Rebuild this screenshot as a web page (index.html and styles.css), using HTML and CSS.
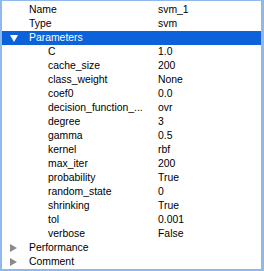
FILE: index.html
```html
<!DOCTYPE html>
<html lang="en">
<head>
    <meta charset="UTF-8">
    <title>Properties</title>
    <link rel="stylesheet" href="styles.css">
</head>
<body>
    <div class="frame">
        <div class="outline">
            <div class="row"><span class="name">Name</span><span class="value">svm_1</span></div>
            <div class="row"><span class="name">Type</span><span class="value">svm</span></div>
            <div class="row group selected"><span class="name"><i class="arrow down"></i>Parameters</span><span class="value"></span></div>
            <div class="row child"><span class="name">C</span><span class="value">1.0</span></div>
            <div class="row child"><span class="name">cache_size</span><span class="value">200</span></div>
            <div class="row child"><span class="name">class_weight</span><span class="value">None</span></div>
            <div class="row child"><span class="name">coef0</span><span class="value">0.0</span></div>
            <div class="row child"><span class="name" title="decision_function_shape">decision_function_...</span><span class="value">ovr</span></div>
            <div class="row child"><span class="name">degree</span><span class="value">3</span></div>
            <div class="row child"><span class="name">gamma</span><span class="value">0.5</span></div>
            <div class="row child"><span class="name">kernel</span><span class="value">rbf</span></div>
            <div class="row child"><span class="name">max_iter</span><span class="value">200</span></div>
            <div class="row child"><span class="name">probability</span><span class="value">True</span></div>
            <div class="row child"><span class="name">random_state</span><span class="value">0</span></div>
            <div class="row child"><span class="name">shrinking</span><span class="value">True</span></div>
            <div class="row child"><span class="name">tol</span><span class="value">0.001</span></div>
            <div class="row child"><span class="name">verbose</span><span class="value">False</span></div>
            <div class="row group"><span class="name"><i class="arrow"></i>Performance</span><span class="value"></span></div>
            <div class="row group"><span class="name"><i class="arrow"></i>Comment</span><span class="value"></span></div>
        </div>
    </div>
</body>
</html>
```

FILE: styles.css
```css
html, body {
    margin: 0;
    padding: 0;
    background: #fff;
}
.frame {
    width: 264px;
    height: 271px;
    box-sizing: border-box;
    border-style: solid;
    border-color: #8fb8ec;
    border-width: 1px 3px 2px 2px;
    background: #fff;
    overflow: hidden;
}
.outline {
    padding-top: 2px;
    font: 10.4px/14px "Liberation Sans", Arial, sans-serif;
    color: #000;
}
.row {
    display: grid;
    grid-template-columns: 156px 1fr;
    height: 14px;
}
.name {
    padding-left: 27px;
    white-space: nowrap;
    position: relative;
}
.child .name { padding-left: 46px; }
.selected {
    background: #0c62d8;
    color: #fff;
}
/* disclosure triangles */
.arrow {
    position: absolute;
    left: 8px;
    top: 3px;
    width: 0;
    height: 0;
    border-style: solid;
    border-width: 4px 0 4px 7px;
    border-color: transparent transparent transparent #8a8a8a;
}
.arrow.down {
    top: 4px;
    border-width: 7px 4px 0 4px;
    border-color: #fff transparent transparent transparent;
}
```
